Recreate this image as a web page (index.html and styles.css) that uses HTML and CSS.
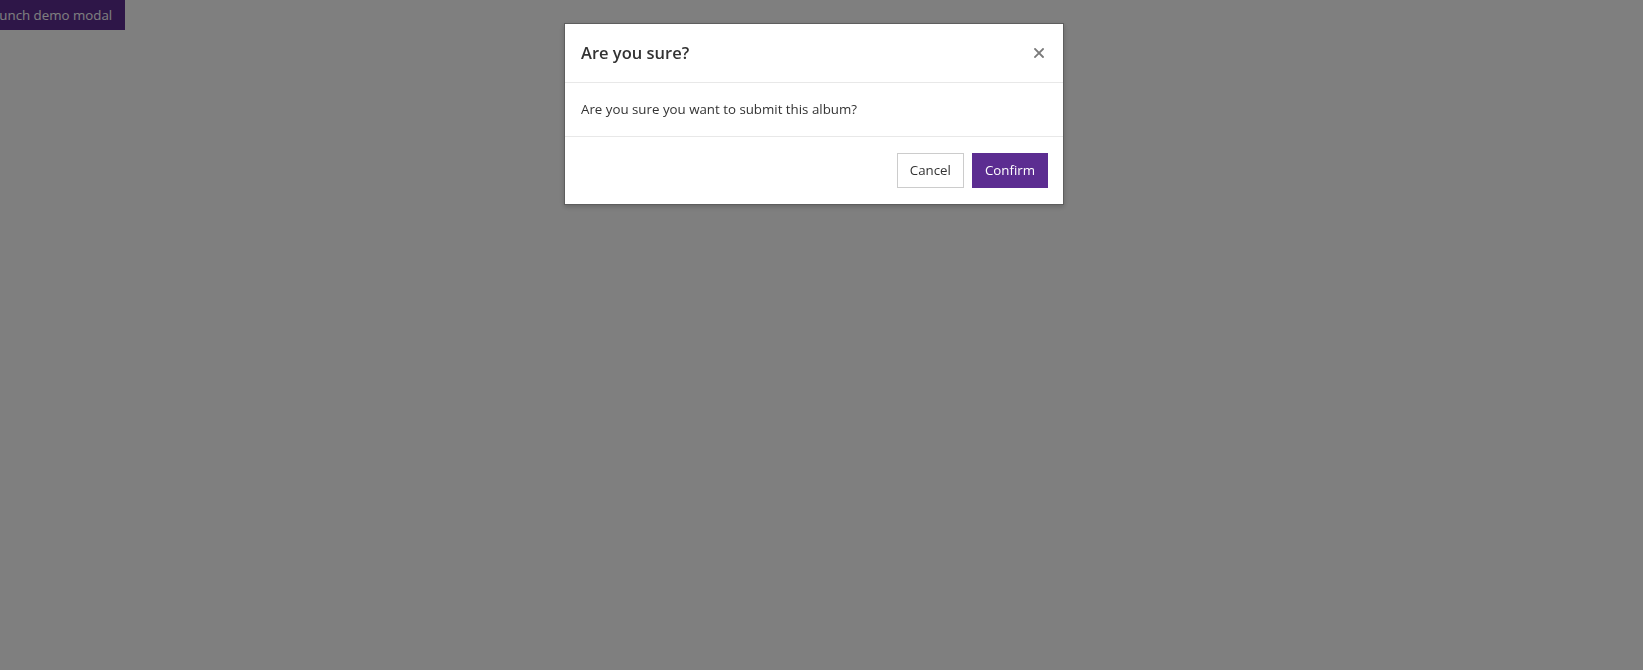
FILE: index.html
```html
<!DOCTYPE html>
<html lang="en">
<head>
<meta charset="utf-8">
<title>Modal</title>
<link rel="stylesheet" href="styles.css">
</head>
<body>
<button class="launch" type="button">Launch demo modal</button>

<div class="backdrop"></div>
<div class="modal">
  <div class="modal-dialog">
    <div class="modal-header">
      <h4 class="modal-title">Are you sure?</h4>
      <button class="close" type="button" aria-label="Close">
        <svg width="10" height="10" viewBox="0 0 10 10"><path d="M1 1L9 9M9 1L1 9" stroke="#7a7a7a" stroke-width="1.8" stroke-linecap="square"/></svg>
      </button>
    </div>
    <div class="modal-body">Are you sure you want to submit this album?</div>
    <div class="modal-footer">
      <button class="btn btn-default" type="button">Cancel</button>
      <button class="btn btn-primary" type="button">Confirm</button>
    </div>
  </div>
</div>
</body>
</html>
```

FILE: styles.css
```css
html, body {
  margin: 0;
  padding: 0;
  height: 100%;
  background: #ffffff;
  font-family: "Open Sans", "Noto Sans", sans-serif;
  font-size: 13.3px;
  color: #333333;
}

.launch {
  display: block;
  margin-left: -28px;
  height: 30px;
  padding: 0 12px;
  border: 1px solid #5c2d91;
  background: #5c2d91;
  color: #ffffff;
  font-family: inherit;
  font-size: 13.3px;
}

.backdrop {
  position: fixed;
  inset: 0;
  background: rgba(0, 0, 0, 0.5);
}

.modal {
  position: fixed;
  inset: 0;
  padding-right: 15px;
  display: flex;
  justify-content: center;
  align-items: flex-start;
}

.modal-dialog {
  margin-top: 23px;
  width: 500px;
  box-sizing: border-box;
  background: #ffffff;
  border: 1px solid #5e5e5e;
  box-shadow: 0 2px 5px rgba(0, 0, 0, 0.2);
}

.modal-header {
  display: flex;
  align-items: center;
  justify-content: space-between;
  padding: 16px;
  border-bottom: 1px solid #e8e8e8;
}

.modal-title {
  margin: 0;
  font-size: 16.5px;
  line-height: 26px;
  font-weight: 600;
  color: #333333;
}

.close {
  display: flex;
  align-items: center;
  justify-content: center;
  width: 20px;
  height: 20px;
  margin-right: -2px;
  padding: 0;
  border: 0;
  background: transparent;
}

.modal-body {
  padding: 16px;
  line-height: 21px;
  font-size: 13.3px;
  color: #333333;
}

.modal-footer {
  display: flex;
  justify-content: flex-end;
  gap: 8px;
  padding: 16px 15px 16px;
  border-top: 1px solid #e8e8e8;
}

.btn {
  height: 35px;
  padding: 0 12px;
  font-family: inherit;
  font-size: 13.3px;
  line-height: 21px;
  border: 1px solid transparent;
  border-radius: 0;
}

.btn-default {
  background: #ffffff;
  border-color: #cccccc;
  color: #333333;
}

.btn-primary {
  background: #5c2d91;
  border-color: #5c2d91;
  color: #ffffff;
}
```
